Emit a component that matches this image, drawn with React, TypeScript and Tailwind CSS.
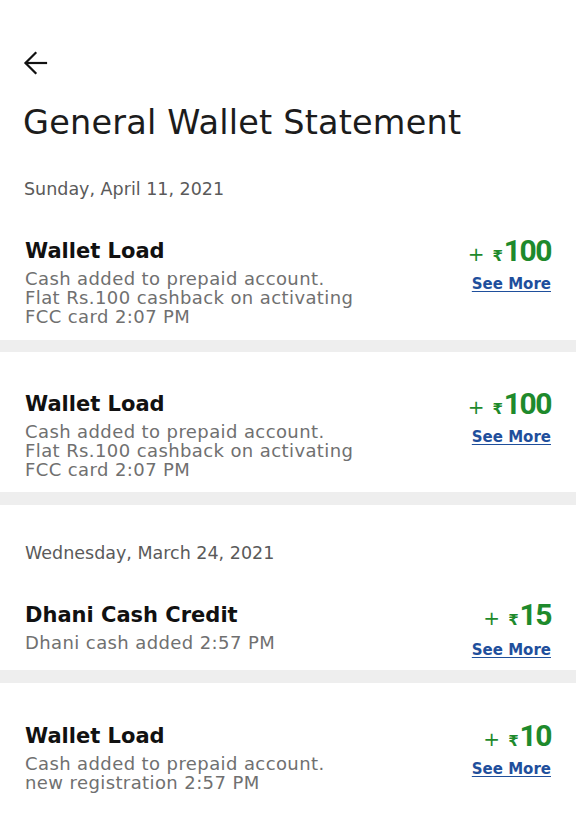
import React from "react";

const font = { fontFamily: '"DejaVu Sans", "Noto Sans", sans-serif' };

function Amount({ value }: { value: string }) {
  return (
    <div className="flex items-baseline justify-end text-[#1e8a2c] h-[28px] leading-[28px]">
      <span className="text-[20px] font-normal mr-[8px]">+</span>
      <span className="text-[15px] font-bold mr-[1px]">₹</span>
      <span className="text-[30px] font-bold tracking-[-1.5px]" style={{ fontFamily: "Roboto, sans-serif" }}>
        {value}
      </span>
    </div>
  );
}

function Item({
  title,
  lines,
  value,
  pt,
  pb,
  seeMt,
}: {
  title: string;
  lines: string[];
  value: string;
  pt: string;
  pb: string;
  seeMt: string;
}) {
  return (
    <div className={`flex justify-between px-[25px] ${pt} ${pb}`}>
      <div className="flex flex-col">
        <div className="text-[21px] leading-[28px] font-bold text-[#111]">{title}</div>
        <div className="mt-[4px] text-[18px] leading-[19px] tracking-[0.4px] text-[#707070]">
          {lines.map((l, i) => (
            <div key={i}>{l}</div>
          ))}
        </div>
      </div>
      <div className="flex flex-col items-end">
        <Amount value={value} />
        <div className={`${seeMt} text-[15px] leading-[18px] font-bold text-[#1f4f9c] underline underline-offset-2`}>
          See More
        </div>
      </div>
    </div>
  );
}

export default function App() {
  return (
    <div className="w-[576px] min-h-[824px] bg-white" style={font}>
      <div className="px-[23px] pt-[50px]">
        <svg width="25" height="26" viewBox="0 0 25 26" fill="none" stroke="#111" strokeWidth="2.2" strokeLinecap="square">
          <path d="M3 13 H23" />
          <path d="M12.5 3 L2.5 13 L12.5 23" strokeLinejoin="miter" />
        </svg>
        <h1 className="mt-[27px] text-[33.5px] leading-[40px] font-normal text-[#1c1c1c] tracking-[0.2px]">
          General Wallet Statement
        </h1>
        <div className="mt-[34px] pl-[1px] text-[17.5px] leading-[24px] text-[#5a5a5a]">Sunday, April 11, 2021</div>
      </div>
      <Item
        title="Wallet Load"
        lines={["Cash added to prepaid account.", "Flat Rs.100 cashback on activating", "FCC card 2:07 PM"]}
        value="100"
        pt="pt-[36px]"
        pb="pb-[14px]"
        seeMt="mt-[10px]"
      />
      <div className="h-[12px] bg-[#eeeeee]" />
      <Item
        title="Wallet Load"
        lines={["Cash added to prepaid account.", "Flat Rs.100 cashback on activating", "FCC card 2:07 PM"]}
        value="100"
        pt="pt-[38px]"
        pb="pb-[13px]"
        seeMt="mt-[10px]"
      />
      <div className="h-[13px] bg-[#eeeeee]" />
      <div className="px-[25px] pt-[36px] text-[17.5px] leading-[24px] text-[#5a5a5a]">Wednesday, March 24, 2021</div>
      <Item
        title="Dhani Cash Credit"
        lines={["Dhani cash added 2:57 PM"]}
        value="15"
        pt="pt-[36px]"
        pb="pb-[11px]"
        seeMt="mt-[12px]"
      />
      <div className="h-[13px] bg-[#eeeeee]" />
      <Item
        title="Wallet Load"
        lines={["Cash added to prepaid account.", "new registration 2:57 PM"]}
        value="10"
        pt="pt-[39px]"
        pb="pb-[30px]"
        seeMt="mt-[10px]"
      />
    </div>
  );
}
